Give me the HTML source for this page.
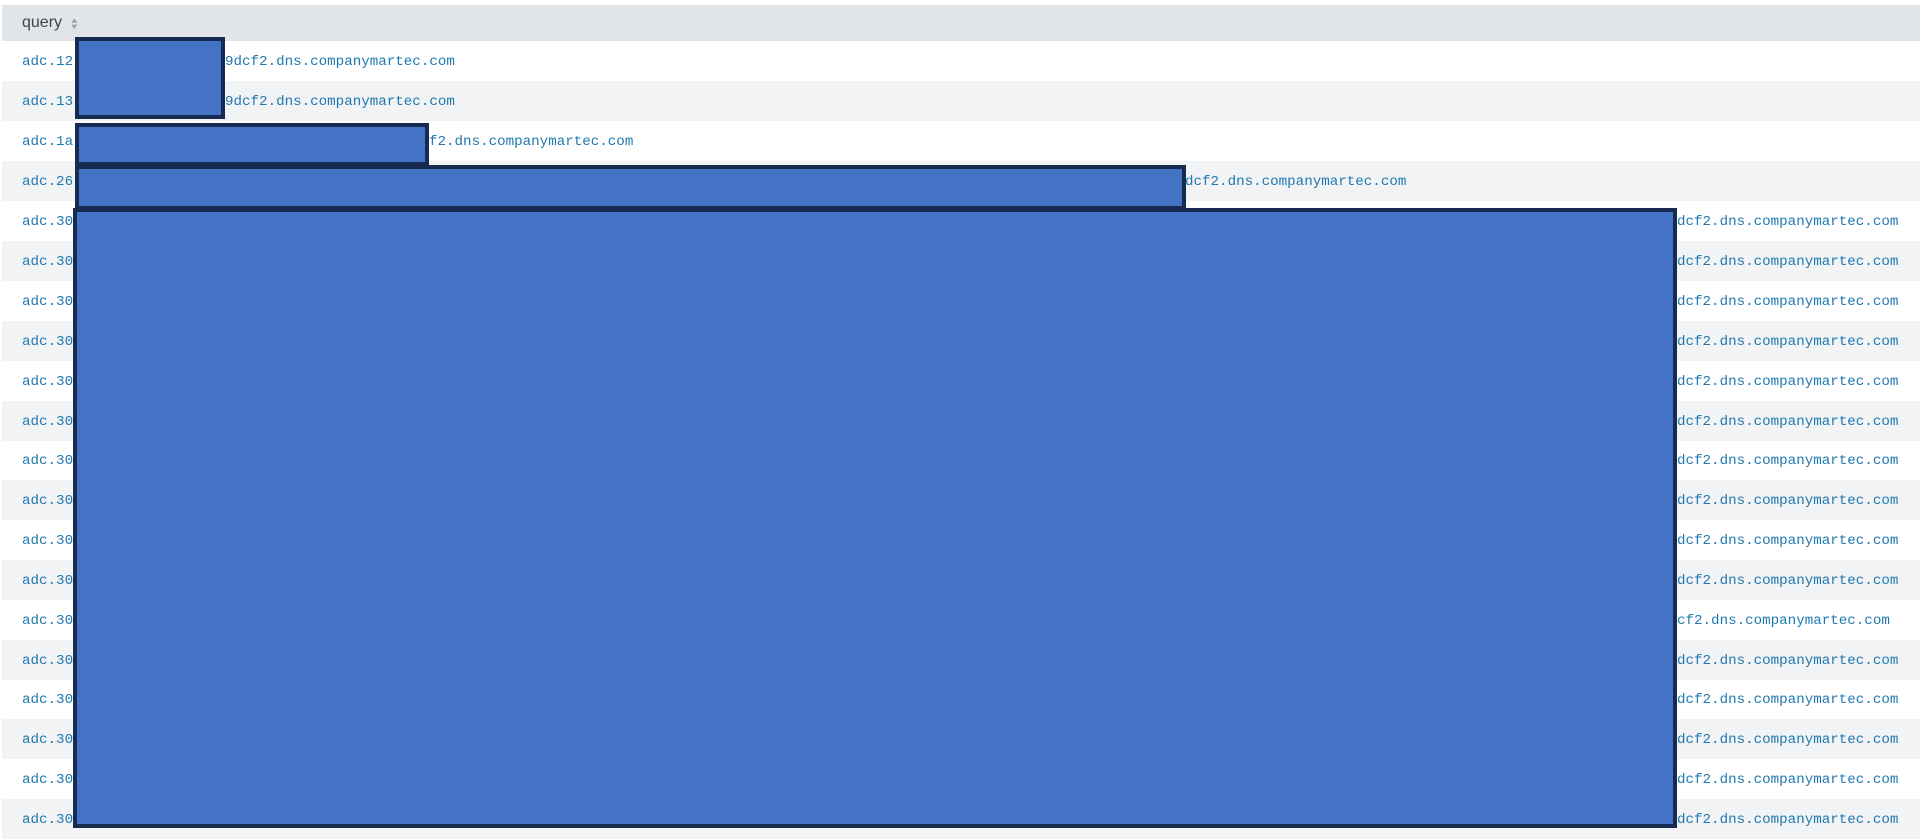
<!DOCTYPE html>
<html><head><style>
body{margin:0;width:1920px;height:839px;overflow:hidden;background:#fff;position:relative;font-family:"Liberation Mono",monospace;}
.hd{position:absolute;left:2px;top:5px;width:1918px;height:36px;background:#e1e5ea;}
.hd span{position:absolute;left:20px;top:9px;font-family:"Liberation Sans",sans-serif;font-size:16px;color:#3c444d;}
.hd i{position:absolute;left:70px;top:14px;font-style:normal;font-size:8px;color:#9aa3ad;line-height:6px;transform:scaleX(1.3)}
.r{position:absolute;left:2px;width:1918px;height:40px;font-size:14.2px;color:#1f79b0;}
.r:nth-child(odd){background:#f2f3f5}
.r span{position:absolute;top:13px;}
.b{position:absolute;background:#4472c4;border:4px solid #172a50;box-sizing:border-box;}
</style></head><body>
<div class="hd"><span>query</span><i>▲<br>▼</i></div>
<div class="r" style="top:41px"><span style="left:20px">adc.12</span><span style="left:223px">9dcf2.dns.companymartec.com</span></div>
<div class="r" style="top:81px"><span style="left:20px">adc.13</span><span style="left:223px">9dcf2.dns.companymartec.com</span></div>
<div class="r" style="top:121px"><span style="left:20px">adc.1a</span><span style="left:427px">f2.dns.companymartec.com</span></div>
<div class="r" style="top:161px"><span style="left:20px">adc.26</span><span style="left:1183px">dcf2.dns.companymartec.com</span></div>
<div class="r" style="top:201px"><span style="left:20px">adc.30</span><span style="left:1675px">dcf2.dns.companymartec.com</span></div>
<div class="r" style="top:241px"><span style="left:20px">adc.30</span><span style="left:1675px">dcf2.dns.companymartec.com</span></div>
<div class="r" style="top:281px"><span style="left:20px">adc.30</span><span style="left:1675px">dcf2.dns.companymartec.com</span></div>
<div class="r" style="top:321px"><span style="left:20px">adc.30</span><span style="left:1675px">dcf2.dns.companymartec.com</span></div>
<div class="r" style="top:361px"><span style="left:20px">adc.30</span><span style="left:1675px">dcf2.dns.companymartec.com</span></div>
<div class="r" style="top:401px"><span style="left:20px">adc.30</span><span style="left:1675px">dcf2.dns.companymartec.com</span></div>
<div class="r" style="top:440px"><span style="left:20px">adc.30</span><span style="left:1675px">dcf2.dns.companymartec.com</span></div>
<div class="r" style="top:480px"><span style="left:20px">adc.30</span><span style="left:1675px">dcf2.dns.companymartec.com</span></div>
<div class="r" style="top:520px"><span style="left:20px">adc.30</span><span style="left:1675px">dcf2.dns.companymartec.com</span></div>
<div class="r" style="top:560px"><span style="left:20px">adc.30</span><span style="left:1675px">dcf2.dns.companymartec.com</span></div>
<div class="r" style="top:600px"><span style="left:20px">adc.30</span><span style="left:1675px">cf2.dns.companymartec.com</span></div>
<div class="r" style="top:640px"><span style="left:20px">adc.30</span><span style="left:1675px">dcf2.dns.companymartec.com</span></div>
<div class="r" style="top:679px"><span style="left:20px">adc.30</span><span style="left:1675px">dcf2.dns.companymartec.com</span></div>
<div class="r" style="top:719px"><span style="left:20px">adc.30</span><span style="left:1675px">dcf2.dns.companymartec.com</span></div>
<div class="r" style="top:759px"><span style="left:20px">adc.30</span><span style="left:1675px">dcf2.dns.companymartec.com</span></div>
<div class="r" style="top:799px"><span style="left:20px">adc.30</span><span style="left:1675px">dcf2.dns.companymartec.com</span></div>
<div class="b" style="left:75px;top:37px;width:150px;height:82px"></div>
<div class="b" style="left:75px;top:123px;width:354px;height:43px"></div>
<div class="b" style="left:75px;top:165px;width:1111px;height:45px"></div>
<div class="b" style="left:73px;top:208px;width:1604px;height:620px"></div>
</body></html>
